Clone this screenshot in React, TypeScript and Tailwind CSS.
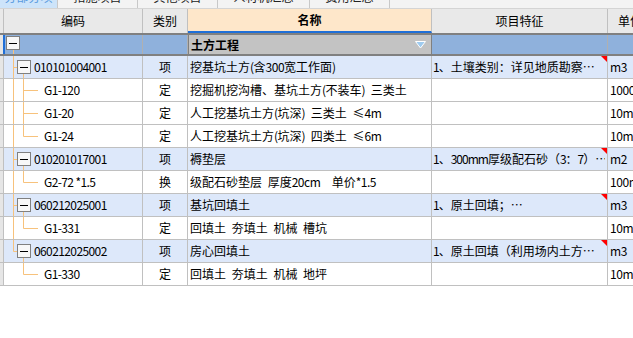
import { FC } from "react";

type Row = {
  kind: "qd" | "de";
  code: string;
  type: string;
  name: string;
  feat?: string;
  unit: string;
  lastChild?: boolean;
  lastQd?: boolean;
};

const rows: Row[] = [
  { kind: "qd", code: "010101004001", type: "项", name: "挖基坑土方(含300宽工作面)", feat: "1、土壤类别：详见地质勘察…", unit: "m3" },
  { kind: "de", code: "G1-120", type: "定", name: "挖掘机挖沟槽、基坑土方(不装车) 三类土", unit: "1000m3" },
  { kind: "de", code: "G1-20", type: "定", name: "人工挖基坑土方(坑深) 三类土 ≤4m", unit: "10m3" },
  { kind: "de", code: "G1-24", type: "定", name: "人工挖基坑土方(坑深) 四类土 ≤6m", unit: "10m3", lastChild: true },
  { kind: "qd", code: "010201017001", type: "项", name: "褥垫层", feat: "1、300mm厚级配石砂（3：7）…", unit: "m2" },
  { kind: "de", code: "G2-72 *1.5", type: "换", name: "级配石砂垫层 厚度20cm  单价*1.5", unit: "100m2", lastChild: true },
  { kind: "qd", code: "060212025001", type: "项", name: "基坑回填土", feat: "1、原土回填；…", unit: "m3" },
  { kind: "de", code: "G1-331", type: "定", name: "回填土 夯填土 机械 槽坑", unit: "10m3", lastChild: true },
  { kind: "qd", code: "060212025002", type: "项", name: "房心回填土", feat: "1、原土回填（利用场内土方…", unit: "m3", lastQd: true },
  { kind: "de", code: "G1-330", type: "定", name: "回填土 夯填土 机械 地坪", unit: "10m3", lastChild: true, lastQd: true },
];

const tabs = ["分部分项", "措施项目", "其他项目", "人材机汇总", "费用汇总"];
const tabWidths = ["w-[58px]", "w-[80px]", "w-[80px]", "w-[92px]", "w-[80px]"];

const LINE = "#f7c27c";

// Latin runs are narrower in the original (bitmap font), squeeze them a bit
const Mixed: FC<{ text: string; tight?: boolean }> = ({ text, tight }) => (
  <>
    {text.split(/([\x21-\x7e]+)/).map((part, i) =>
      /^[\x21-\x7e]+$/.test(part) ? (
        <span key={i} className={tight ? "tracking-[-1px]" : "tracking-[-0.5px]"}>
          {part}
        </span>
      ) : (
        <span key={i}>{part}</span>
      )
    )}
  </>
);

// minus box used in the tree
const MinusBox: FC<{ x: number; y: number }> = ({ x, y }) => (
  <g>
    <rect x={x + 0.5} y={y + 0.5} width={13} height={13} fill="#f8f8f8" stroke="#808080" />
    <line x1={x + 3} y1={y + 7.5} x2={x + 11} y2={y + 7.5} stroke="#000" />
  </g>
);

const TreeQd: FC<{ last?: boolean }> = ({ last }) => (
  <svg width="30" height="22" className="shrink-0">
    <line x1="9.5" y1="0" x2="9.5" y2={last ? 11.5 : 22} stroke={LINE} />
    <line x1="9.5" y1="11.5" x2="13" y2="11.5" stroke={LINE} />
    <line x1="19.5" y1="18" x2="19.5" y2="22" stroke={LINE} />
    <MinusBox x={13} y={4} />
  </svg>
);

const TreeDe: FC<{ lastChild?: boolean; lastQd?: boolean }> = ({ lastChild, lastQd }) => (
  <svg width="40" height="22" className="shrink-0">
    {!lastQd && <line x1="9.5" y1="0" x2="9.5" y2="22" stroke={LINE} />}
    <line x1="19.5" y1="0" x2="19.5" y2={lastChild ? 11.5 : 22} stroke={LINE} />
    <line x1="19.5" y1="11.5" x2="34" y2="11.5" stroke={LINE} />
  </svg>
);

const App: FC = () => {
  return (
    <div
      className="w-[633px] h-[338px] overflow-hidden bg-white text-[12px] text-black"
      style={{ fontFamily: '"Noto Sans CJK SC", "Liberation Sans", sans-serif' }}
    >
      {/* Tab strip, mostly scrolled out of view */}
      <div className="flex h-[9px] border-b border-[#d4d4d4] bg-[#f3f3f3]">
        {tabs.map((t, i) => (
          <div
            key={t}
            className={`${tabWidths[i]} shrink-0 overflow-hidden border-r border-[#c8c8c8] text-center ${
              i === 0 ? "bg-[#cde4fa] text-[#5a9be0]" : "text-[#222]"
            }`}
          >
            <div className="mt-[-9px] leading-[12px]">{t}</div>
          </div>
        ))}
      </div>

      <div className="w-[660px]">
        {/* Header */}
        <div className="flex h-[24px] bg-[#e9e9e9] leading-[24px]">
          <div className="w-[4px] shrink-0 border-r border-[#c0c0c0]" />
          <div className="w-[139px] shrink-0 border-r border-[#c0c0c0] text-center">编码</div>
          <div className="w-[45px] shrink-0 border-r border-[#c0c0c0] text-center">类别</div>
          <div className="w-[244px] shrink-0 border-r border-[#c0c0c0] border-b-2 border-b-[#1f6fd8] bg-[#fee7ca] text-center font-bold leading-[22px]">
            名称
          </div>
          <div className="w-[176px] shrink-0 border-r border-[#c0c0c0] text-center">项目特征</div>
          <div className="w-[44px] shrink-0 text-center">单位</div>
        </div>

        {/* Group row */}
        <div className="flex h-[23px] border-y-2 border-[#808080] bg-[#8fb1dc] leading-[19px]">
          <div className="w-[5px] shrink-0 bg-[#e6e6e6] border-r-2 border-[#1f6fd8]" />
          <div className="flex w-[138px] shrink-0 items-center border-r border-[#b0b0b0]">
            <svg width="20" height="19" className="shrink-0">
              <line x1="8.5" y1="15" x2="8.5" y2="19" stroke={LINE} />
              <MinusBox x={1} y={1} />
            </svg>
          </div>
          <div className="w-[45px] shrink-0 border-r border-[#b0b0b0]" />
          <div className="flex w-[244px] shrink-0 items-center justify-between border-x border-[#808080] bg-[#c3c3c3] pl-[2px] pr-[5px] font-bold">
            <span>土方工程</span>
            <svg width="11" height="8" className="shrink-0">
              <polygon points="0.5,0.5 10.5,0.5 5.5,7" fill="#9fcbef" stroke="#ffffff" />
            </svg>
          </div>
          <div className="w-[176px] shrink-0 border-r border-[#b0b0b0]" />
          <div className="w-[44px] shrink-0" />
        </div>

        {/* Body rows */}
        {rows.map((r) => {
          const bg = r.kind === "qd" ? "bg-[#dde8fa]" : "bg-white";
          return (
            <div key={r.code} className={`flex h-[23px] border-b border-[#c0c0c0] leading-[22px] ${bg}`}>
              <div className="w-[4px] shrink-0 border-r border-[#c0c0c0] bg-[#e6e6e6]" />
              <div className="flex w-[139px] shrink-0 items-center border-r border-[#c0c0c0]">
                {r.kind === "qd" ? (
                  <TreeQd last={r.lastQd} />
                ) : (
                  <TreeDe lastChild={r.lastChild} lastQd={r.lastQd} />
                )}
                <span className="tracking-[-0.6px] whitespace-pre">{r.code}</span>
              </div>
              <div className="w-[45px] shrink-0 border-r border-[#c0c0c0] text-center">{r.type}</div>
              <div className="w-[244px] shrink-0 overflow-hidden border-r border-[#c0c0c0] pl-[2px] whitespace-pre [word-spacing:3px]">
                <Mixed text={r.name} />
              </div>
              <div className="relative w-[176px] shrink-0 border-r border-[#c0c0c0] pl-[1px]">
                <div className="w-[172px] overflow-hidden whitespace-nowrap">
                  {r.feat && <Mixed text={r.feat} tight />}
                </div>
                {r.feat && (
                  <span className="absolute right-0 top-0 h-0 w-0 border-l-[6px] border-t-[6px] border-l-transparent border-t-[#ff0000]" />
                )}
              </div>
              <div className="w-[44px] shrink-0 overflow-hidden pl-[2px] tracking-[-0.4px] whitespace-nowrap">{r.unit}</div>
            </div>
          );
        })}
      </div>
    </div>
  );
};

export default App;
